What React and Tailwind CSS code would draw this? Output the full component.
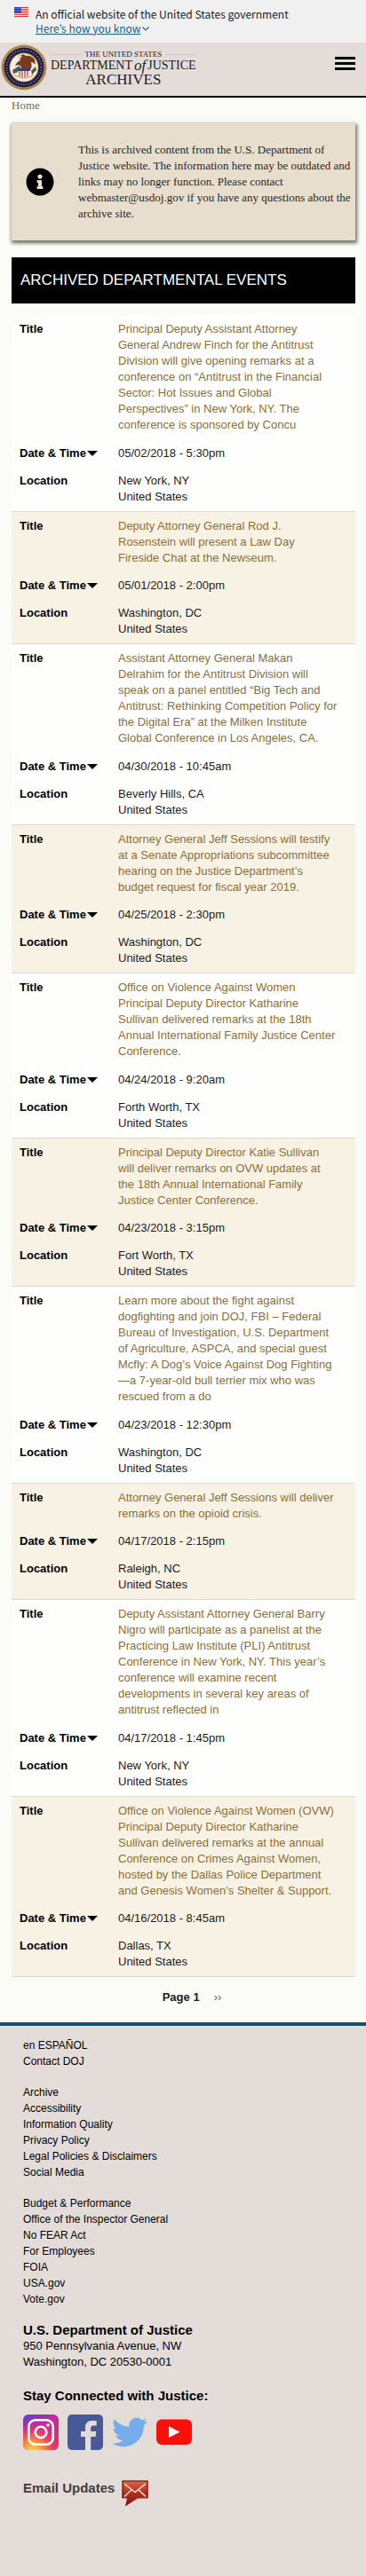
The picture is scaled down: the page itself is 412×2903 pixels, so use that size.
import React from "react";
import { FaInfoCircle } from "react-icons/fa";

const events = [
  {
    title:
      "Principal Deputy Assistant Attorney General Andrew Finch for the Antitrust Division will give opening remarks at a conference on “Antitrust in the Financial Sector: Hot Issues and Global Perspectives” in New York, NY. The conference is sponsored by Concu",
    date: "05/02/2018 - 5:30pm",
    city: "New York, NY",
  },
  {
    title: "Deputy Attorney General Rod J. Rosenstein will present a Law Day Fireside Chat at the Newseum.",
    date: "05/01/2018 - 2:00pm",
    city: "Washington, DC",
  },
  {
    title:
      "Assistant Attorney General Makan Delrahim for the Antitrust Division will speak on a panel entitled “Big Tech and Antitrust: Rethinking Competition Policy for the Digital Era” at the Milken Institute Global Conference in Los Angeles, CA.",
    date: "04/30/2018 - 10:45am",
    city: "Beverly Hills, CA",
  },
  {
    title:
      "Attorney General Jeff Sessions will testify at a Senate Appropriations subcommittee hearing on the Justice Department’s budget request for fiscal year 2019.",
    date: "04/25/2018 - 2:30pm",
    city: "Washington, DC",
  },
  {
    title:
      "Office on Violence Against Women Principal Deputy Director Katharine Sullivan delivered remarks at the 18th Annual International Family Justice Center Conference.",
    date: "04/24/2018 - 9:20am",
    city: "Forth Worth, TX",
  },
  {
    title:
      "Principal Deputy Director Katie Sullivan will deliver remarks on OVW updates at the 18th Annual International Family Justice Center Conference.",
    date: "04/23/2018 - 3:15pm",
    city: "Fort Worth, TX",
  },
  {
    title:
      "Learn more about the fight against dogfighting and join DOJ, FBI – Federal Bureau of Investigation, U.S. Department of Agriculture, ASPCA, and special guest Mcfly: A Dog’s Voice Against Dog Fighting—a 7-year-old bull terrier mix who was rescued from a do",
    date: "04/23/2018 - 12:30pm",
    city: "Washington, DC",
  },
  {
    title: "Attorney General Jeff Sessions will deliver remarks on the opioid crisis.",
    date: "04/17/2018 - 2:15pm",
    city: "Raleigh, NC",
  },
  {
    title:
      "Deputy Assistant Attorney General Barry Nigro will participate as a panelist at the Practicing Law Institute (PLI) Antitrust Conference in New York, NY. This year’s conference will examine recent developments in several key areas of antitrust reflected in",
    date: "04/17/2018 - 1:45pm",
    city: "New York, NY",
  },
  {
    title:
      "Office on Violence Against Women (OVW) Principal Deputy Director Katharine Sullivan delivered remarks at the annual Conference on Crimes Against Women, hosted by the Dallas Police Department and Genesis Women’s Shelter & Support.",
    date: "04/16/2018 - 8:45am",
    city: "Dallas, TX",
  },
];

const footerGroups = [
  ["en ESPAÑOL", "Contact DOJ"],
  ["Archive", "Accessibility", "Information Quality", "Privacy Policy", "Legal Policies & Disclaimers", "Social Media"],
  ["Budget & Performance", "Office of the Inspector General", "No FEAR Act", "For Employees", "FOIA", "USA.gov", "Vote.gov"],
];

function Flag() {
  return (
    <svg className="mt-2 h-[11px] w-4 shrink-0" viewBox="0 0 16 11" aria-hidden="true">
      <rect width="16" height="11" fill="#fff" />
      {[0, 2, 4, 6, 8, 10].map((y) => (
        <rect key={y} y={y} width="16" height="1" fill="#d8382c" />
      ))}
      <rect width="8" height="7" fill="#1f33a8" />
      {[1, 3, 5].map((y) =>
        [1, 3, 5, 7].map((x) => <rect key={`${x}-${y}`} x={x - 0.4} y={y - 0.2} width="0.8" height="0.8" fill="#fff" />)
      )}
    </svg>
  );
}

function Seal() {
  return (
    <svg className="h-[52px] w-[52px] shrink-0" viewBox="0 0 52 52" aria-hidden="true">
      <circle cx="26" cy="26" r="25.5" fill="#b9985a" />
      <circle cx="26" cy="26" r="24" fill="none" stroke="#7a5a24" strokeWidth="1" strokeDasharray="1.5 1" />
      <circle cx="26" cy="26" r="22.5" fill="#1f1a44" />
      <circle cx="26" cy="26" r="19.5" fill="none" stroke="#8f86a0" strokeWidth="2" strokeDasharray="1 2" />
      <circle cx="26" cy="26" r="16.5" fill="#c9a458" />
      <circle cx="26" cy="26" r="15.5" fill="#f3ede4" />
      <path d="M20 14c2-3 6-3 8-1 4-1 8 1 10 4l1 6c-2-2-3-3-5-3 1 3 1 6-1 9l-5-2-4 2-2-5c-2-1-4-1-6 1 1-4 3-6 6-7z" fill="#7a3a22" />
      <path d="M20 14c1-2 3-2 4-1l-2 3-3 1z" fill="#e9d6b0" />
      <path d="M13 29l8-5 2 6-9 3zM34 30l5-5 1 4-5 5z" fill="#4b6240" />
      <path d="M19 27h14v5c0 4-4 6-7 7-3-1-7-3-7-7z" fill="#f6f2f2" />
      <path d="M19 27h14v3H19z" fill="#27408f" />
      <path d="M21 30v6M24 30v8M27 30v8M30 30v6" stroke="#c3474a" strokeWidth="1.3" />
      <path d="M15 34c6 5 16 5 22 0" fill="none" stroke="#c9b37c" strokeWidth="1.5" />
    </svg>
  );
}

function Instagram() {
  return (
    <svg className="h-10 w-10" viewBox="0 0 40 40" aria-hidden="true">
      <defs>
        <linearGradient id="ig-base" x1="0" y1="0" x2="0.6" y2="1">
          <stop offset="0" stopColor="#5a3fd0" />
          <stop offset="0.45" stopColor="#c22a9c" />
          <stop offset="1" stopColor="#e0306e" />
        </linearGradient>
        <radialGradient id="ig-glow" cx="0.27" cy="1.05" r="0.9">
          <stop offset="0" stopColor="#ffd95c" />
          <stop offset="0.3" stopColor="#fb9b3a" />
          <stop offset="0.65" stopColor="#ee3f5c" stopOpacity="0.8" />
          <stop offset="1" stopColor="#d02c8e" stopOpacity="0" />
        </radialGradient>
      </defs>
      <rect width="40" height="40" rx="6" fill="url(#ig-base)" />
      <rect width="40" height="40" rx="6" fill="url(#ig-glow)" />
      <g fill="none" stroke="#fff" strokeWidth="2.6">
        <rect x="6.3" y="6.3" width="27.4" height="27.4" rx="7.5" />
        <circle cx="20" cy="20" r="6.3" />
      </g>
      <circle cx="28" cy="12" r="1.8" fill="#fff" />
    </svg>
  );
}

function Facebook() {
  return (
    <svg className="h-10 w-10" viewBox="0 0 40 40" aria-hidden="true">
      <rect width="40" height="40" rx="5" fill="#475a96" />
      <path d="M20 40V25h-5v-6h5v-4.500c0-5 3-7.500 7.500-7.500 2 0 3.700.1 5.200.3v5.200h-3.400c-2.600 0-3.100 1.200-3.100 3V19h6.100l-.8 6h-5.300v15z" fill="#e4dcd9" />
    </svg>
  );
}

function Twitter() {
  return (
    <svg className="h-10 w-10" viewBox="0 0 24 24" aria-hidden="true">
      <path
        d="M23.95 4.570a10 10 0 0 1-2.820.770 4.960 4.960 0 0 0 2.160-2.720c-.95.550-2 .950-3.130 1.180a4.920 4.920 0 0 0-8.380 4.480C7.690 8.090 4.070 6.130 1.640 3.160a4.820 4.820 0 0 0-.67 2.480c0 1.710.87 3.210 2.190 4.100a4.900 4.900 0 0 1-2.230-.620v.060a4.920 4.920 0 0 0 3.950 4.830 5 5 0 0 1-2.210.080 4.940 4.940 0 0 0 4.600 3.420A9.870 9.870 0 0 1 0 19.540a14 14 0 0 0 7.550 2.210c9.050 0 14-7.500 14-13.980 0-.21 0-.42-.02-.63A9.940 9.940 0 0 0 24 4.590z"
        fill="#76aceb"
      />
    </svg>
  );
}

function Youtube() {
  return (
    <svg className="h-10 w-10" viewBox="0 0 40 40" aria-hidden="true">
      <rect y="5.500" width="40" height="28.500" rx="6" fill="#fb0f0a" />
      <path d="M14 13.300v12.800l12.500-6.400z" fill="#fff" />
    </svg>
  );
}

function Envelope() {
  return (
    <svg className="h-[30px] w-[30px]" viewBox="0 0 30 30" aria-hidden="true">
      <defs>
        <linearGradient id="mail" x1="0" y1="0" x2="0" y2="1">
          <stop offset="0" stopColor="#dd6a45" />
          <stop offset="0.45" stopColor="#b5301f" />
          <stop offset="1" stopColor="#7a1414" />
        </linearGradient>
      </defs>
      <path d="M.5.500h29v20H18L4 29.500l2-9H.5z" fill="url(#mail)" />
      <path d="M.5 1h29M1 1v19M29 1v19" stroke="#5a1511" strokeWidth="1" />
      <path d="M3 4l12 9.500L27 4M3 18.500l8-7.500M27 18.500L19 11" fill="none" stroke="#fbe3d3" strokeWidth="1.500" />
    </svg>
  );
}

function EventRecord({ event, shaded }) {
  const label = "pl-[9px] pt-[7px] pb-1.5 text-left align-top font-bold text-black";
  return (
    <tbody className={shaded ? "bg-[#f8f2e4]" : "bg-[#fefefd]"}>
      <tr>
        <th scope="row" className={label}>Title</th>
        <td className={shaded ? "pt-[7px] pb-1.5 pr-5 align-top" : "py-[7px] pr-5 align-top"}>
          <a href="#event" className="text-[#8a7038]">{event.title}</a>
        </td>
      </tr>
      <tr>
        <th scope="row" className={label}>
          <a href="#sort" className="flex items-center">
            Date &amp; Time
            <svg className="ml-px h-1.5 w-3" viewBox="0 0 12 6" aria-hidden="true">
              <path d="M0 0h12L6 6z" />
            </svg>
          </a>
        </th>
        <td className="pt-[7px] pb-1.5 pr-5 align-top">{event.date}</td>
      </tr>
      <tr className="border-b border-[#dfdbd3]">
        <th scope="row" className={label}>Location</th>
        <td className="py-[7px] pr-5 align-top">
          {event.city}
          <br />
          United States
        </td>
      </tr>
    </tbody>
  );
}

export default function App() {
  return (
    <div className="bg-[#fbfcf8] font-['Liberation_Sans',Arial,sans-serif] text-[13px] leading-[18px] text-[#1b1b1b]">
      <section
        aria-label="Official government website"
        className="flex gap-2 bg-[#f0f0f0] px-4 pb-2 font-['Noto_Sans_CJK_KR',sans-serif] text-[12px] leading-4"
      >
        <Flag />
        <div className="pt-2">
          <p>An official website of the United States government</p>
          <button type="button" className="flex items-center text-[#1a5c94]">
            <span className="underline">Here’s how you know</span>
            <svg className="ml-0.5 h-2 w-2" viewBox="0 0 8 8" fill="none" stroke="#3d5f7c" aria-hidden="true">
              <path d="M.5 2.500L4 6l3.500-3.500" strokeWidth="1.200" />
            </svg>
          </button>
        </div>
      </section>

      <header className="flex items-start justify-between border-b-2 border-black bg-[#e4dcd9] pt-0.5 pr-3 pb-1.5">
        <a href="#home" className="flex items-start gap-1 pl-px font-['Liberation_Serif',serif] text-[#1f1a18]">
          <Seal />
          <span className="flex flex-col items-center pt-[7px]">
            <span className="flex w-full items-center gap-1 text-[9px] leading-[9px]">
              <span className="h-px flex-1 bg-[#cfc5c1]" />
              THE UNITED STATES
              <span className="h-px flex-1 bg-[#cfc5c1]" />
            </span>
            <span className="flex items-center text-[14px] leading-4">
              DEPARTMENT
              <i className="px-0.5 text-[17px]">of</i>
              JUSTICE
            </span>
            <span className="text-[17px] leading-4">ARCHIVES</span>
          </span>
        </a>
        <button type="button" aria-label="Menu" className="mt-3.5 flex w-[23px] flex-col gap-[3px]">
          <span className="h-[3px] w-full bg-black" />
          <span className="h-[3px] w-full bg-black" />
          <span className="h-[3px] w-full bg-black" />
        </button>
      </header>

      <main className="pr-3 pb-[19px] pl-[13px]">
        <nav aria-label="Breadcrumb" className="font-['Liberation_Serif',serif]">
          <a href="#home" className="text-[#7d6a4a]">Home</a>
        </nav>

        <aside className="mt-[11px] flex items-center bg-[#e7dece] py-[21px] font-['Liberation_Serif',serif] text-[#2a2622] shadow-[1px_2px_4px_1px_#6b6b5c]">
          <FaInfoCircle className="mx-4 h-8 w-8 shrink-0 text-black" />
          <p className="ml-[11px] pr-[5px]">
            This is archived content from the U.S. Department of Justice website. The information here may be outdated and
            links may no longer function. Please contact webmaster@usdoj.gov if you have any questions about the archive
            site.
          </p>
        </aside>

        <h1 className="mt-[19px] bg-black px-2.5 py-[17px] text-[17px] leading-[18px] text-white">
          ARCHIVED DEPARTMENTAL EVENTS
        </h1>

        <table className="mt-[13px] w-full table-fixed border-collapse">
          <colgroup>
            <col className="w-[120px]" />
            <col />
          </colgroup>
          {events.map((event, i) => (
            <EventRecord key={event.date} event={event} shaded={i % 2 === 1} />
          ))}
        </table>

        <nav aria-label="Pagination" className="mt-3.5 flex justify-center gap-4 pl-[19px]">
          <strong>Page 1</strong>
          <a href="#next" aria-label="Next page" className="text-[#6f5f38]">››</a>
        </nav>
      </main>

      <footer className="border-t-4 border-[#10536e] bg-[#e4dcd9] px-[26px] pt-[13px] pb-[78px] text-black">
        {footerGroups.map((group) => (
          <ul key={group[0]} className="mb-[17px] text-[12px]">
            {group.map((item) => (
              <li key={item}>
                <a href="#link">{item}</a>
              </li>
            ))}
          </ul>
        ))}
        <h2 className="text-[15px] font-bold">U.S. Department of Justice</h2>
        <address className="not-italic">
          950 Pennsylvania Avenue, NW
          <br />
          Washington, DC 20530-0001
        </address>
        <h2 className="mt-5 text-[15px] font-bold">Stay Connected with Justice:</h2>
        <div className="mt-3 flex gap-2.5">
          <a href="#instagram" aria-label="Instagram"><Instagram /></a>
          <a href="#facebook" aria-label="Facebook"><Facebook /></a>
          <a href="#twitter" aria-label="Twitter"><Twitter /></a>
          <a href="#youtube" aria-label="YouTube"><Youtube /></a>
        </div>
        <a href="#email" className="mt-[34px] flex items-start gap-2 text-[15px] font-bold text-[#453b39]">
          Email Updates
          <Envelope />
        </a>
      </footer>
    </div>
  );
}
